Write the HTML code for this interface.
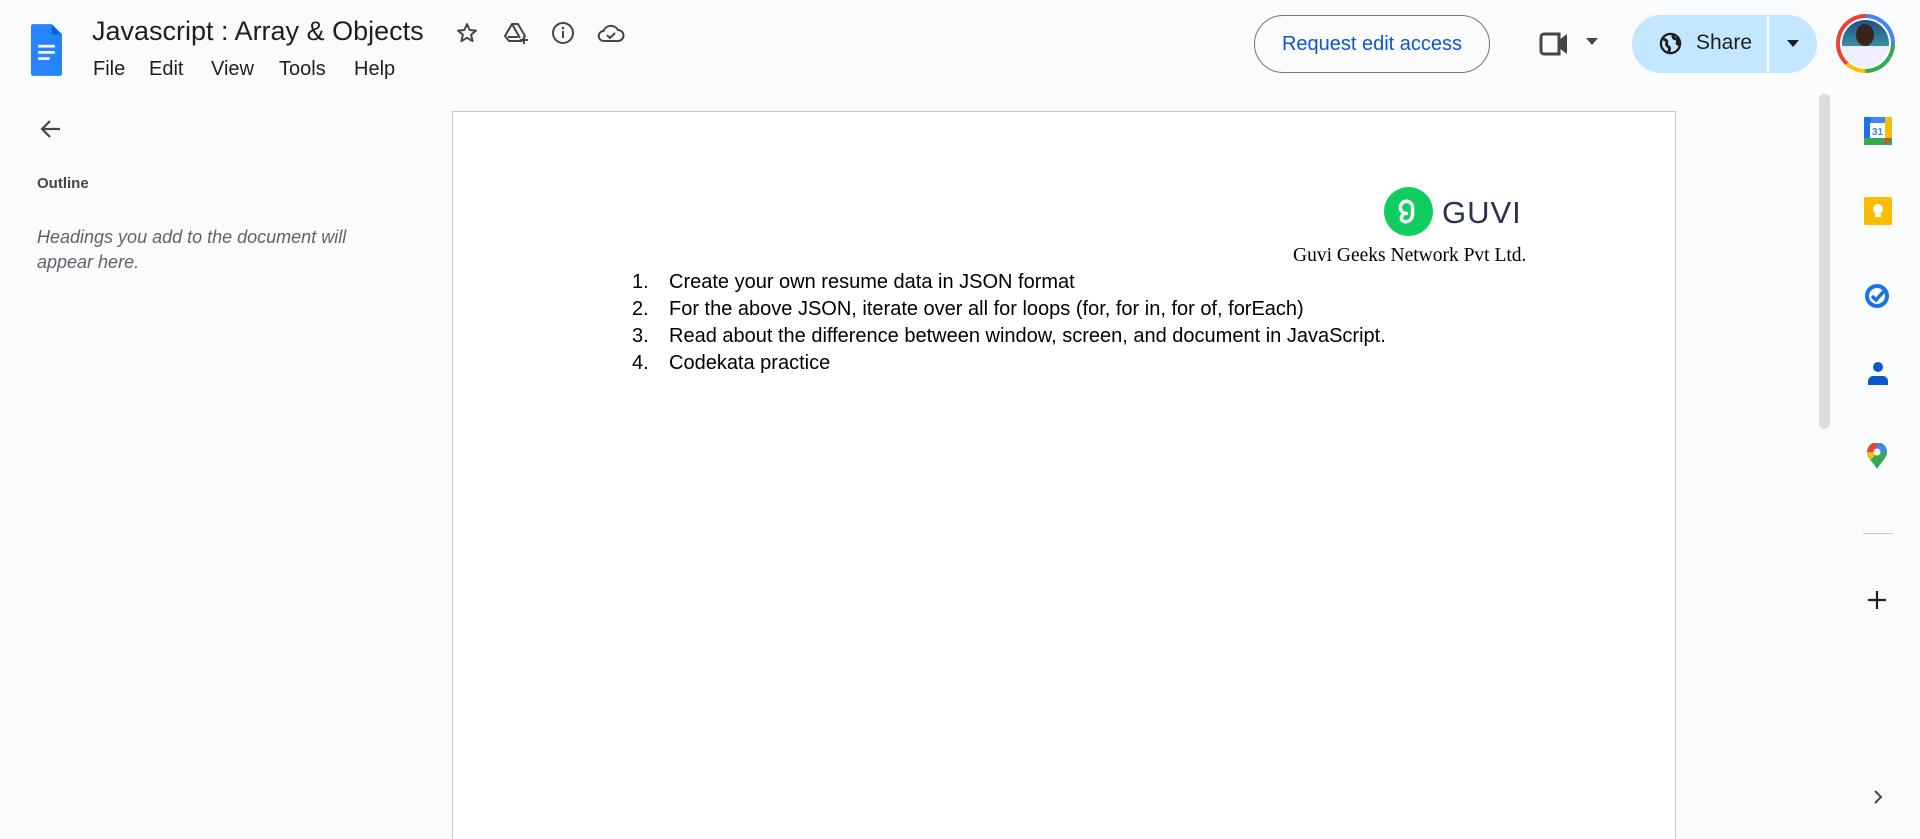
<!DOCTYPE html>
<html><head><meta charset="utf-8"><style>
*{margin:0;padding:0;box-sizing:border-box}
html,body{width:1920px;height:839px;overflow:hidden}
body{background:#f9fbfd;font-family:"Liberation Sans",Arial,sans-serif;color:#1f1f1f;position:relative}
.a{position:absolute}
.menu span{position:absolute;font-size:20px;top:58px;color:#1f1f1f}
.page{position:absolute;left:452px;top:111px;width:1224px;height:728px;background:#fff;border:1px solid #c7c7c7;border-bottom:none}
.li{position:absolute;font-size:20px;color:#000;white-space:nowrap}
.li b{font-weight:normal;position:absolute;left:-37px}
</style></head><body>
<svg class="a" style="left:31px;top:24px" width="31" height="52" viewBox="0 0 30 50">
<path d="M2 0h18l10 10v38a2 2 0 0 1-2 2H2a2 2 0 0 1-2-2V2a2 2 0 0 1 2-2z" fill="#2684fc"/>
<path d="M20 0l10 10H20z" fill="#0066da"/>
<rect x="7" y="20" width="16" height="2.6" fill="#fff"/><rect x="7" y="26" width="16" height="2.6" fill="#fff"/><rect x="7" y="32" width="11" height="2.6" fill="#fff"/>
</svg>
<div class="a" style="left:92px;top:16px;font-size:27px;white-space:nowrap">Javascript : Array &amp; Objects</div>
<div class="menu"><span style="left:93px">File</span><span style="left:149px">Edit</span><span style="left:211px">View</span><span style="left:279px">Tools</span><span style="left:354px">Help</span></div>
<svg class="a" style="left:455px;top:21px" width="24" height="24" viewBox="0 0 24 24"><path d="M12 3l2.6 6 6.4.6-4.9 4.2 1.5 6.3L12 16.8 6.4 20.1l1.5-6.3L3 9.6l6.4-.6z" fill="none" stroke="#444746" stroke-width="2" stroke-linejoin="round"/></svg>
<svg class="a" style="left:503px;top:21px" width="26" height="24" viewBox="0 0 26 24"><path d="M9 3h6l7 12-3 5H6l-4-5z M9 3l8 14M5 16h10" fill="none" stroke="#444746" stroke-width="2" stroke-linejoin="round"/><path d="M21 15v8M17 19h8" stroke="#444746" stroke-width="2"/></svg>
<svg class="a" style="left:551px;top:21px" width="24" height="24" viewBox="0 0 24 24"><circle cx="12" cy="12" r="10" fill="none" stroke="#444746" stroke-width="2"/><path d="M12 10v7" stroke="#444746" stroke-width="2"/><circle cx="12" cy="7" r="1.3" fill="#444746"/></svg>
<svg class="a" style="left:597px;top:21px" width="28" height="24" viewBox="0 0 28 24"><path d="M7 20a5 5 0 0 1-.5-10A8 8 0 0 1 21 9a5.5 5.5 0 0 1 0 11z" fill="none" stroke="#444746" stroke-width="2"/><path d="M10 14l3 3 5-5" fill="none" stroke="#444746" stroke-width="2"/></svg>
<div class="a" style="left:1254px;top:15px;width:236px;height:58px;border:1px solid #747775;border-radius:29px;color:#0b57d0;font-size:20px;line-height:56px;text-align:center">Request edit access</div>
<svg class="a" style="left:1539px;top:31px" width="34" height="26" viewBox="0 0 34 26"><path d="M2 6a3 3 0 0 1 3-3h15v20H5a3 3 0 0 1-3-3z" fill="none" stroke="#444746" stroke-width="3"/><path d="M20 9l8-6v20l-8-6z" fill="#444746"/></svg>
<svg class="a" style="left:1586px;top:38px" width="12" height="8"><path d="M0 0h12L6 7z" fill="#444746"/></svg>
<div class="a" style="left:1632px;top:15px;width:185px;height:58px;border-radius:29px;background:#c2e7ff"></div>
<div class="a" style="left:1767px;top:15px;width:2px;height:58px;background:#f9fbfd"></div>
<svg class="a" style="left:1659px;top:32px" width="23" height="23" viewBox="0 0 24 24"><circle cx="12" cy="12" r="10" fill="none" stroke="#1f1f1f" stroke-width="2.4"/><path d="M4 7c3 1 5 2 4 5s3 3 3 5-1 3-1 5M15 3c-1 2 0 4 2 4s3 2 2 4 2 2 4 2" fill="none" stroke="#1f1f1f" stroke-width="3"/></svg>
<div class="a" style="left:1696px;top:31px;font-size:21px;color:#1f1f1f">Share</div>
<svg class="a" style="left:1787px;top:40px" width="12" height="8"><path d="M0 0h12L6 7z" fill="#1f1f1f"/></svg>
<div class="a" style="left:1836px;top:14px;width:59px;height:59px;border-radius:50%;background:conic-gradient(#4285f4 0 25%,#34a853 25% 50%,#fbbc04 50% 62%,#ea4335 62% 100%)"></div>
<div class="a" style="left:1840px;top:18px;width:51px;height:51px;border-radius:50%;background:#fff"></div>
<div class="a" style="left:1842px;top:20px;width:47px;height:47px;border-radius:50%;background:linear-gradient(#1f4e8a,#3a8fa0 55%,#eef 56%)"></div>
<div class="a" style="left:1856px;top:24px;width:18px;height:22px;border-radius:50%;background:#3a2418"></div>
<svg class="a" style="left:38px;top:117px" width="26" height="24" viewBox="0 0 24 24"><path d="M21 12H4M11 4l-8 8 8 8" fill="none" stroke="#444746" stroke-width="2.2"/></svg>
<div class="a" style="left:37px;top:175px;font-size:15px;font-weight:bold;color:#444746">Outline</div>
<div class="a" style="left:37px;top:225px;font-size:18px;font-style:italic;color:#5f6368;line-height:25px">Headings you add to the document will<br>appear here.</div>
<div class="page"></div>
<svg class="a" style="left:1384px;top:187px" width="49" height="49" viewBox="0 0 48 48"><circle cx="24" cy="24" r="24" fill="#0fce5f"/><path d="M22 26a6 6 0 1 1 6-6v6c0 5-3 8-7 8s-5-4-3-6" fill="none" stroke="#fff" stroke-width="3.4" stroke-linecap="round"/></svg>
<div class="a" style="left:1442px;top:195px;font-size:31px;color:#2b3150;letter-spacing:1px">GUVI</div>
<div class="a" style="left:1293px;top:245px;font-family:'Liberation Serif',serif;font-size:19.5px;color:#000;white-space:nowrap">Guvi Geeks Network Pvt Ltd.</div>
<div class="li" style="left:669px;top:271px"><b>1.</b>Create your own resume data in JSON format</div>
<div class="li" style="left:669px;top:298px"><b>2.</b>For the above JSON, iterate over all for loops (for, for in, for of, forEach)</div>
<div class="li" style="left:669px;top:325px"><b>3.</b>Read about the difference between window, screen, and document in JavaScript.</div>
<div class="li" style="left:669px;top:352px"><b>4.</b>Codekata practice</div>
<div class="a" style="left:1819px;top:94px;width:11px;height:335px;border-radius:6px;background:#dadce0"></div>
<svg class="a" style="left:1864px;top:117px" width="28" height="28" viewBox="0 0 28 28"><rect width="28" height="28" rx="2" fill="#4285f4"/><rect y="21" width="28" height="7" fill="#34a853"/><rect x="21" width="7" height="21" fill="#fbbc04"/><rect x="0" y="0" width="7" height="21" fill="#1a73e8"/><path d="M21 28l7-7h-7z" fill="#ea4335"/><rect x="6" y="6" width="15" height="15" fill="#fff"/><text x="13.5" y="18" font-size="10" text-anchor="middle" fill="#4285f4" font-family="Liberation Sans" font-weight="bold">31</text></svg>
<svg class="a" style="left:1864px;top:197px" width="28" height="28" viewBox="0 0 28 28"><rect width="28" height="28" rx="2" fill="#fbbc04"/><circle cx="14" cy="12" r="5" fill="#fff"/><rect x="11" y="17" width="6" height="3" fill="#fff"/></svg>
<svg class="a" style="left:1864px;top:282px" width="28" height="26" viewBox="0 0 28 26"><circle cx="13" cy="14" r="10" fill="none" stroke="#1a73e8" stroke-width="4"/><path d="M8 14l4 4 9-10" fill="none" stroke="#1a73e8" stroke-width="3.5"/></svg>
<svg class="a" style="left:1866px;top:361px" width="24" height="26" viewBox="0 0 24 26"><circle cx="12" cy="6" r="5" fill="#0b57d0"/><path d="M2 24v-4a5 5 0 0 1 5-5h10a5 5 0 0 1 5 5v4z" fill="#0b57d0"/></svg>
<svg class="a" style="left:1867px;top:443px" width="20" height="26" viewBox="0 0 20 26"><path d="M10 26C6 19 0 15 0 9a10 10 0 0 1 20 0c0 6-6 10-10 17z" fill="#34a853"/><path d="M0 9A10 10 0 0 1 10 0l0 9z" fill="#ea4335"/><path d="M10 0a10 10 0 0 1 10 9H10z" fill="#4285f4"/><path d="M0 9h10l-6 8C2 14 0 12 0 9z" fill="#fbbc04"/><circle cx="10" cy="9" r="3.5" fill="#fff"/></svg>
<div class="a" style="left:1863px;top:533px;width:30px;height:1px;background:#c7c7c7"></div>
<svg class="a" style="left:1867px;top:590px" width="20" height="20"><path d="M10 1v18M1 10h18" stroke="#1f1f1f" stroke-width="2.2"/></svg>
<svg class="a" style="left:1872px;top:789px" width="12" height="16"><path d="M3 2l6 6-6 6" fill="none" stroke="#444746" stroke-width="2"/></svg>
</body></html>
